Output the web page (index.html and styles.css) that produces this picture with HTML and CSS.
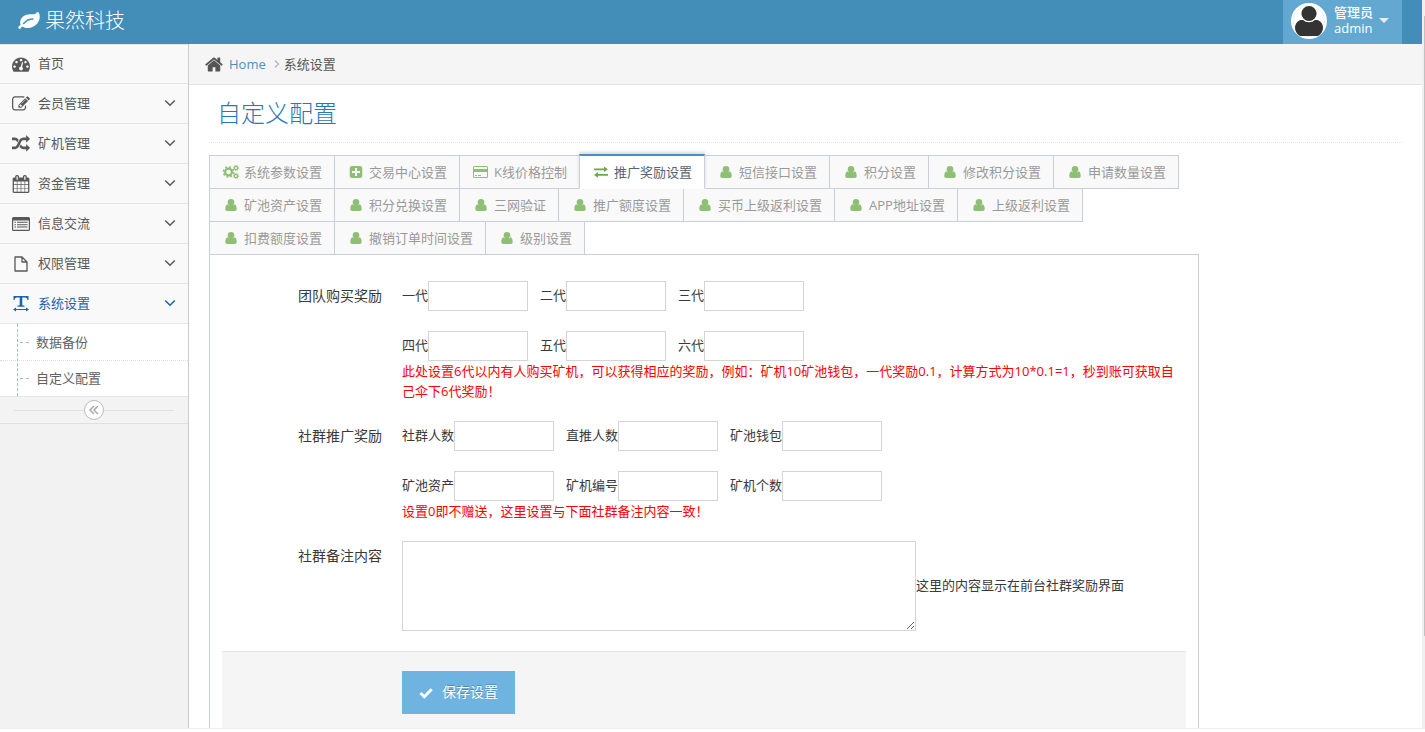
FILE: index.html
```html
<!DOCTYPE html>
<html lang="zh-CN">
<head>
<meta charset="utf-8">
<title>自定义配置</title>
<link rel="stylesheet" href="styles.css">
</head>
<body>
<svg class="sprite" aria-hidden="true">
  <symbol id="i-user" viewBox="0 0 18 14"><circle cx="9" cy="4.200" r="3.300"/><path d="M5.600 6.200C4 6.500 3.300 8.500 3.300 10.800C3.300 12.200 4 13 5.200 13H12.800C14 13 14.700 12.200 14.700 10.800C14.700 8.500 14 6.500 12.400 6.200C10.500 8.200 7.500 8.200 5.600 6.200Z"/><path d="M7 6H11V9H7Z"/></symbol>
  <symbol id="i-down" viewBox="0 0 12 8"><path d="M1.200 1.500L6 6.200L10.800 1.500" fill="none" stroke="currentColor" stroke-width="1.500"/></symbol>
</svg>
<div class="window">
  <div class="app">
    <header class="navbar">
      <a class="brand" href="#">
        <svg class="leaf" viewBox="0 120 1792 1420"><path d="M1280 704q0-26-19-45t-45-19q-172 0-318 49.5t-259.5 134-235.5 219.500q-19 21-19 45 0 26 19 45t45 19q24 0 45-19 27-24 74-71t67-66q137-124 268.500-176t313.500-52q26 0 45-19t19-45zm512-198q0 95-20 193-46 224-184.500 383t-357.500 268q-214 108-438 108-148 0-286-47-15-5-88-42t-96-37q-16 0-39.500 32t-45 70-52.500 70-60 32q-43 0-63.500-17.500t-45.500-59.500q-2-4-6-11t-5.500-10-3-9.500-1.500-13.500q0-35 31-73.500t68-65.500 68-56 31-48q0-4-14-38t-16-44q-9-51-9-104 0-115 43.500-220t119-184.500 170.500-139 204-95.500q55-18 145-25.500t179.500-9 178.500-6 163.500-24 113.500-56.500l29.500-29.500 29.500-28 27-20 36.500-16 43.500-4.500q39 0 70.500 46t47.500 112 24 124 8 96z"/></svg>
        <span>果然科技</span>
      </a>
      <button class="account" type="button">
        <svg class="avatar" viewBox="0 0 36 36"><circle cx="18" cy="18" r="18" fill="#fff"/><circle cx="18" cy="18" r="15.500" fill="none" stroke="#ddd" stroke-width=".7" stroke-dasharray="2 1"/><path d="M10 17H26C29.500 17.500 32 21 32 25C32 28 30 31.500 27 33H9C6 31.500 4 28 4 25C4 21 6.500 17.500 10 17Z" fill="#333"/><circle cx="18" cy="10.500" r="8.200" fill="#333" stroke="#fff" stroke-width="1.200"/></svg>
        <span class="who">管理员<br>admin</span>
        <span class="caret"></span>
      </button>
    </header>
    <div class="body">
      <nav class="sidebar">
        <ul class="menu">
          <li><a href="#"><svg class="ico" viewBox="0 0 1792 1792"><path d="M384 1152q0-53-37.500-90.500t-90.500-37.500-90.500 37.500-37.500 90.500 37.500 90.500 90.500 37.500 90.500-37.500 37.500-90.500zm192-448q0-53-37.500-90.500t-90.500-37.500-90.500 37.500-37.500 90.500 37.500 90.500 90.500 37.500 90.500-37.500 37.500-90.500zm428 481l101-382q6-26-7.500-48.500t-38.500-29.500-48 6.500-30 39.500l-101 382q-60 5-107 43.500t-63 98.500q-20 77 20 146t117 89 146-20 89-117q16-60-6-117t-72-91zm660-33q0-53-37.500-90.500t-90.500-37.500-90.500 37.500-37.500 90.500 37.500 90.500 90.500 37.500 90.500-37.500 37.500-90.500zm-640-640q0-53-37.500-90.500t-90.500-37.500-90.500 37.500-37.500 90.500 37.500 90.500 90.500 37.500 90.500-37.500 37.500-90.500zm448 192q0-53-37.500-90.500t-90.500-37.500-90.500 37.500-37.500 90.500 37.500 90.500 90.500 37.500 90.500-37.500 37.500-90.500zm320 448q0 261-141 483-19 29-54 29h-1402q-35 0-54-29-141-221-141-483 0-182 71-348t191-286 286-191 348-71 348 71 286 191 191 286 71 348z"/></svg><span>首页</span></a></li>
          <li><a href="#"><svg class="ico" viewBox="0 0 1792 1792"><path d="M888 1184l116-116-152-152-116 116v56h96v96h56zm440-720q-16-16-33 1l-350 350q-17 17-1 33t33-1l350-350q17-17 1-33zm80 594v190q0 119-84.500 203.500t-203.500 84.500h-832q-119 0-203.500-84.500t-84.500-203.500v-832q0-119 84.500-203.500t203.500-84.500h832q63 0 117 25 15 7 18 23 3 17-9 29l-49 49q-14 14-32 8-23-6-45-6h-832q-66 0-113 47t-47 113v832q0 66 47 113t113 47h832q66 0 113-47t47-113v-126q0-13 9-22l64-64q15-15 35-7t20 29zm-96-738l288 288-672 672h-288v-288zm444 132l-92 92-288-288 92-92q28-28 68-28t68 28l152 152q28 28 28 68t-28 68z"/></svg><span>会员管理</span><svg class="chev"><use href="#i-down"/></svg></a></li>
          <li><a href="#"><svg class="ico" viewBox="0 0 1792 1792"><path d="M666 481q-60 92-137 273-22-45-37-72.500t-40.500-63.500-51-56.500-63-35-81.500-14.500h-224q-14 0-23-9t-9-23v-192q0-14 9-23t23-9h224q250 0 410 225zm1126 799q0 14-9 23l-320 320q-9 9-23 9-13 0-22.500-9.500t-9.500-22.500v-192q-32 0-85 .5t-81 1-73-1-71-5-64-10.500-63-18.500-58-28.500-59-40-55-53.500-56-69.500q59-93 136-273 22 45 37 72.500t40.500 63.500 51 56.500 63 35 81.500 14.500h256v-192q0-14 9-23t23-9q12 0 24 10l319 319q9 9 9 23zm0-896q0 14-9 23l-320 320q-9 9-23 9-13 0-22.500-9.500t-9.500-22.500v-192h-256q-48 0-87 15t-69 45-51 61.500-45 77.500q-32 62-78 171-29 66-49.500 111t-54 105-64 100-74 83-90 68.500-106.500 42-128 16.500h-224q-14 0-23-9t-9-23v-192q0-14 9-23t23-9h224q48 0 87-15t69-45 51-61.500 45-77.500q32-62 78-171 29-66 49.500-111t54-105 64-100 74-83 90-68.500 106.500-42 128-16.500h256v-192q0-14 9-23t23-9q12 0 24 10l319 319q9 9 9 23z"/></svg><span>矿机管理</span><svg class="chev"><use href="#i-down"/></svg></a></li>
          <li><a href="#"><svg class="ico" viewBox="0 0 1792 1792"><path d="M192 1664h288v-288h-288v288zm352 0h320v-288h-320v288zm-352-352h288v-320h-288v320zm352 0h320v-320h-320v320zm-352-384h288v-288h-288v288zm736 736h320v-288h-320v288zm-384-736h320v-288h-320v288zm768 736h288v-288h-288v288zm-384-352h320v-320h-320v320zm-352-864v-288q0-13-9.500-22.500t-22.500-9.500h-64q-13 0-22.500 9.500t-9.500 22.500v288q0 13 9.500 22.500t22.500 9.500h64q13 0 22.500-9.500t9.500-22.500zm736 864h288v-320h-288v320zm-384-384h320v-288h-320v288zm384 0h288v-288h-288v288zm32-480v-288q0-13-9.500-22.500t-22.500-9.500h-64q-13 0-22.500 9.500t-9.500 22.500v288q0 13 9.500 22.500t22.500 9.500h64q13 0 22.500-9.500t9.500-22.500zm384-64v1280q0 52-38 90t-90 38h-1408q-52 0-90-38t-38-90v-1280q0-52 38-90t90-38h128v-96q0-66 47-113t113-47h64q66 0 113 47t47 113v96h384v-96q0-66 47-113t113-47h64q66 0 113 47t47 113v96h128q52 0 90 38t38 90z"/></svg><span>资金管理</span><svg class="chev"><use href="#i-down"/></svg></a></li>
          <li><a href="#"><svg class="ico" viewBox="0 0 18 18"><path fill-rule="evenodd" d="M1.500 2H16.500Q18 2 18 3.500V14.500Q18 16 16.500 16H1.500Q0 16 0 14.500V3.500Q0 2 1.500 2ZM1.200 5.500V14.800H16.800V5.500Z"/><path d="M2.500 6.800h1.500v1h-1.500zM5 6.800h10.500v1H5zM2.500 9.200h1.500v1h-1.500zM5 9.200h10.500v1H5zM2.500 11.600h1.500v1h-1.500zM5 11.600h10.500v1H5z"/></svg><span>信息交流</span><svg class="chev"><use href="#i-down"/></svg></a></li>
          <li><a href="#"><svg class="ico" viewBox="0 0 18 18"><path d="M3 2H10L15 7V16H3ZM10 2V7H15" fill="none" stroke="currentColor" stroke-width="1.300" stroke-linejoin="round"/></svg><span>权限管理</span><svg class="chev"><use href="#i-down"/></svg></a></li>
          <li class="open"><a href="#"><svg class="ico" viewBox="0 0 18 18"><path d="M1.500 1H16.500V5H15.600Q15.200 2.500 13.500 2.400H10.300V10.300L12.500 10.800V11.700H5.500V10.800L7.700 10.300V2.400H4.500Q2.800 2.500 2.400 5H1.500Z"/><path d="M1 14.500L4 12.500V13.900H14V12.500L17 14.500L14 16.500V15.100H4V16.500Z"/></svg><span>系统设置</span><svg class="chev"><use href="#i-down"/></svg></a>
            <ul class="submenu">
              <li><a href="#">数据备份</a></li>
              <li><a href="#">自定义配置</a></li>
            </ul>
          </li>
        </ul>
        <div class="collapse"><button type="button" aria-label="收起"><svg viewBox="0 0 18 18"><path d="M9 5L5 9L9 13M13 5L9 9L13 13" fill="none" stroke="#aaa" stroke-width="1.500"/></svg></button></div>
      </nav>
      <main class="main">
        <div class="crumbs">
          <svg class="home" viewBox="0 128 1664 1536"><path d="M1408 992v480q0 26-19 45t-45 19h-384v-384h-256v384h-384q-26 0-45-19t-19-45v-480q0-1 .5-3t.5-3l575-474 575 474q1 2 1 6zm223-69l-62 74q-8 9-21 11h-3q-13 0-21-7l-692-577-692 577q-12 8-24 7-13-2-21-11l-62-74q-8-10-7-23.500t11-21.500l719-599q32-26 76-26t76 26l244 204v-195q0-14 9-23t23-9h192q14 0 23 9t9 23v408l219 182q10 8 11 21.500t-7 23.500z"/></svg>
          <a href="#">Home</a>
          <svg class="sep" viewBox="0 0 6 10"><path d="M1 1.500L4.500 5L1 8.500" fill="none" stroke="#b2b6bf" stroke-width="1.300"/></svg>
          <span>系统设置</span>
        </div>
        <div class="content">
          <h1>自定义配置</h1>
          <div class="config">
            <ul class="tabs">
              <li><a href="#"><svg class="tico" viewBox="0 0 18 14"><g fill="none" stroke="currentColor"><circle cx="6.500" cy="7" r="3.400" stroke-width="2.200"/><circle cx="6.500" cy="7" r="5.100" stroke-width="1.600" stroke-dasharray="2 2"/><circle cx="14" cy="3" r="1.600" stroke-width="1.200"/><circle cx="14" cy="3" r="2.600" stroke-width="1" stroke-dasharray="1.050 1"/><circle cx="14" cy="11" r="1.600" stroke-width="1.200"/><circle cx="14" cy="11" r="2.600" stroke-width="1" stroke-dasharray="1.050 1"/></g></svg>系统参数设置</a></li>
              <li><a href="#"><svg class="tico" viewBox="0 0 18 14"><path fill-rule="evenodd" d="M5 1H13Q15.300 1 15.300 3V11Q15.300 13 13 13H5Q2.700 13 2.700 11V3Q2.700 1 5 1ZM8 3V6H5V8H8V11H10V8H13V6H10V3Z"/></svg>交易中心设置</a></li>
              <li><a href="#"><svg class="tico" viewBox="0 0 18 14"><path fill-rule="evenodd" d="M2.500 1H14.500Q16 1 16 2.500V11.500Q16 13 14.500 13H2.500Q1 13 1 11.500V2.500Q1 1 2.500 1ZM2 2V4H15V2ZM2 7V12H15V7Z"/><path d="M3 10h2v1H3zM6 10h3v1H6z"/></svg>K线价格控制</a></li>
              <li class="active"><a href="#"><svg class="tico" viewBox="0 0 18 14"><path d="M2 3.400H12V1.500L16 4.300L12 7V5.200H2ZM16 9H6V7L2 9.900L6 12.700V10.800H16Z"/></svg>推广奖励设置</a></li>
              <li><a href="#"><svg class="tico"><use href="#i-user"/></svg>短信接口设置</a></li>
              <li><a href="#"><svg class="tico"><use href="#i-user"/></svg>积分设置</a></li>
              <li><a href="#"><svg class="tico"><use href="#i-user"/></svg>修改积分设置</a></li>
              <li><a href="#"><svg class="tico"><use href="#i-user"/></svg>申请数量设置</a></li>
              <li><a href="#"><svg class="tico"><use href="#i-user"/></svg>矿池资产设置</a></li>
              <li><a href="#"><svg class="tico"><use href="#i-user"/></svg>积分兑换设置</a></li>
              <li><a href="#"><svg class="tico"><use href="#i-user"/></svg>三网验证</a></li>
              <li><a href="#"><svg class="tico"><use href="#i-user"/></svg>推广额度设置</a></li>
              <li><a href="#"><svg class="tico"><use href="#i-user"/></svg>买币上级返利设置</a></li>
              <li><a href="#"><svg class="tico"><use href="#i-user"/></svg>APP地址设置</a></li>
              <li><a href="#"><svg class="tico"><use href="#i-user"/></svg>上级返利设置</a></li>
              <li><a href="#"><svg class="tico"><use href="#i-user"/></svg>扣费额度设置</a></li>
              <li><a href="#"><svg class="tico"><use href="#i-user"/></svg>撤销订单时间设置</a></li>
              <li><a href="#"><svg class="tico"><use href="#i-user"/></svg>级别设置</a></li>
            </ul>
            <form class="panel">
              <div class="row">
                <div class="label">团队购买奖励</div>
                <div class="fields">
                  <div class="line"><label>一代<input type="text"></label><label>二代<input type="text"></label><label>三代<input type="text"></label></div>
                  <div class="line"><label>四代<input type="text"></label><label>五代<input type="text"></label><label>六代<input type="text"></label></div>
                  <p class="note">此处设置6代以内有人购买矿机，可以获得相应的奖励，例如：矿机10矿池钱包，一代奖励0.1，计算方式为10*0.1=1，秒到账可获取自己伞下6代奖励！</p>
                </div>
              </div>
              <div class="row">
                <div class="label">社群推广奖励</div>
                <div class="fields">
                  <div class="line"><label>社群人数<input type="text"></label><label>直推人数<input type="text"></label><label>矿池钱包<input type="text"></label></div>
                  <div class="line"><label>矿池资产<input type="text"></label><label>矿机编号<input type="text"></label><label>矿机个数<input type="text"></label></div>
                  <p class="note">设置0即不赠送，这里设置与下面社群备注内容一致！</p>
                </div>
              </div>
              <div class="row">
                <label class="label" for="remark">社群备注内容</label>
                <div class="fields remark"><textarea id="remark"></textarea><span>这里的内容显示在前台社群奖励界面</span></div>
              </div>
              <div class="actions">
                <button class="save" type="submit"><svg viewBox="0 0 14 12"><path d="M1.500 6L5.300 9.700L12.700 2.300" fill="none" stroke="currentColor" stroke-width="3"/></svg><span>保存设置</span></button>
              </div>
            </form>
          </div>
        </div>
      </main>
    </div>
  </div>
  <div class="rail"><div class="thumb"></div></div>
</div>
</body>
</html>
```

FILE: styles.css
```css
* { box-sizing: border-box; }
body {
  margin: 0;
  overflow: hidden;
  background: #fff;
  color: #393939;
  font: 13px/20px "Open Sans", "Noto Sans CJK SC", sans-serif;
}
ul { list-style: none; margin: 0; padding: 0; }
a { text-decoration: none; color: inherit; }
button, input, textarea { font: inherit; color: inherit; }
svg { fill: currentColor; flex: none; }
.sprite { position: absolute; width: 0; height: 0; }

.window { display: flex; height: 100vh; padding-bottom: 3px; }
.app {
  flex: 1;
  min-width: 0;
  display: flex;
  flex-direction: column;
  overflow: hidden;
  border-bottom: 1px solid #eee;
}
.rail { width: 3px; padding-top: 16px; background: #f0f0f0; }
.thumb { width: 1px; height: 87%; margin-left: auto; background: #c1c1c1; }

.navbar {
  flex: none;
  display: flex;
  justify-content: space-between;
  height: 44px;
  padding: 0 20px 0 18px;
  background: #438eb9;
  color: #fff;
}
.brand {
  display: flex;
  align-items: center;
  gap: 5px;
  padding-bottom: 3px;
  font-size: 20px;
  font-weight: 300;
  line-height: 40px;
}
.leaf { width: 22px; height: 17px; }
.account {
  display: flex;
  align-items: center;
  padding: 0 13px 3px 8px;
  border: 0;
  background: #62a8d1;
  color: #fff;
  line-height: 16px;
  text-align: left;
}
.avatar { width: 36px; height: 36px; }
.who { margin: 0 6px 0 7px; padding-bottom: 2px; font-weight: 500; }
.caret { border: 5px solid transparent; border-top-color: #eee; border-bottom: 0; }

.body { flex: 1; min-height: 0; display: flex; }
.sidebar {
  flex: none;
  width: 189px;
  border-right: 1px solid #ccc;
  background: #f2f2f2;
}
.menu > li { border-bottom: 1px solid #e5e5e5; }
.menu > li > a {
  display: flex;
  align-items: center;
  gap: 8px;
  height: 39px;
  padding: 0 12px;
  background: #f9f9f9;
  color: #585858;
}
.menu > li > a > span, .menu .chev { margin-bottom: 2px; }
.menu > li:first-child { border-top: 1px solid #e5e5e5; }
.menu > li:first-child > a { height: 38px; }
.ico { width: 18px; height: 18px; }
.chev { width: 12px; height: 8px; margin-left: auto; }
.menu > .open > a { color: #1963aa; }
.submenu { position: relative; border-top: 1px solid #e5e5e5; background: #fff; }
.submenu::before {
  content: "";
  position: absolute;
  top: 0;
  bottom: 0;
  left: 17px;
  border-left: 1px dashed #9dbdd6;
}
.submenu a {
  display: flex;
  align-items: center;
  gap: 7px;
  height: 36px;
  padding-left: 20px;
  color: #616161;
}
.submenu a::before { content: ""; width: 9px; border-top: 1px dashed #9dbdd6; }
.submenu li + li { border-top: 1px dotted #ddd; }
.submenu li + li a { height: 35px; padding-bottom: 1px; }
.collapse {
  display: flex;
  justify-content: center;
  height: 27px;
  padding-top: 3px;
  border-bottom: 1px solid #e0e0e0;
  background: linear-gradient(#e0e0e0, #e0e0e0) center 13px / 160px 1px no-repeat #f3f3f3;
}
.collapse button {
  display: grid;
  place-items: center;
  width: 20px;
  height: 20px;
  padding: 0;
  border: 1px solid #bbb;
  border-radius: 50%;
  background: #fff;
}
.collapse svg { width: 18px; height: 18px; }

.main { flex: 1; min-width: 0; }
.crumbs {
  display: flex;
  align-items: center;
  height: 41px;
  padding-left: 16px;
  border-bottom: 1px solid #e5e5e5;
  background: #f5f5f5;
  color: #555;
}
.crumbs a { margin: 0 8px 0 6px; color: #4c8fbd; }
.home { width: 18px; height: 17px; }
.sep { width: 6px; height: 10px; margin-right: 4px; }
.content { padding: 8px 20px 24px; }
h1 {
  margin: 0 0 12px;
  padding: 0 8px 9px;
  border-bottom: 1px dotted #e2e2e2;
  color: #2679b5;
  font-size: 24px;
  font-weight: 300;
  line-height: 40px;
}

.config { width: 83%; }
.tabs { display: flex; flex-wrap: wrap; }
.tabs li { height: 33px; margin-right: -1px; }
.tabs a {
  display: flex;
  align-items: center;
  gap: 4px;
  height: 34px;
  padding: 0 12px;
  border: 1px solid #c5d0dc;
  background: #f9f9f9;
  color: #999;
  white-space: nowrap;
}
.tico { width: 18px; height: 14px; color: #8fbf74; }
.tabs .active { position: relative; z-index: 1; }
.tabs .active a {
  height: 35px;
  margin-top: -1px;
  border-top: 2px solid #4c8fbd;
  border-bottom-color: #fff;
  background: #fff;
  color: #576373;
  box-shadow: 0 -2px 3px rgba(0, 0, 0, .15);
}
.active .tico { color: #69aa46; }

.panel { padding: 26px 12px 16px; border: 1px solid #c5d0dc; }
.row { display: flex; gap: 20px; margin-bottom: 20px; }
.label { flex: 0 0 160px; font-size: 14px; line-height: 30px; text-align: right; }
.fields { flex: 1; min-width: 0; }
.line { display: flex; gap: 12px; line-height: 28px; }
.line + .line { margin-top: 20px; }
.line label { display: flex; }
input, textarea { border: 1px solid #d5d5d5; background: #fff; }
input { width: 100px; height: 30px; padding: 4px; }
.note { margin: 0; color: #f00; }
.remark { display: flex; align-items: center; }
.remark span { padding-bottom: 2px; }
textarea { width: 514px; height: 90px; padding: 4px; }
.actions { padding: 19px 0 20px 180px; border-top: 1px solid #e5e5e5; background: #f5f5f5; }
.save {
  display: flex;
  align-items: center;
  gap: 9px;
  height: 43px;
  padding: 0 17px;
  border: 0;
  background: #6fb3e0;
  color: #fff;
  font-size: 14px;
  text-shadow: 0 -1px 0 rgba(0, 0, 0, .25);
}
.save span { padding-bottom: 2px; }
.save svg { width: 14px; height: 12px; }
```
